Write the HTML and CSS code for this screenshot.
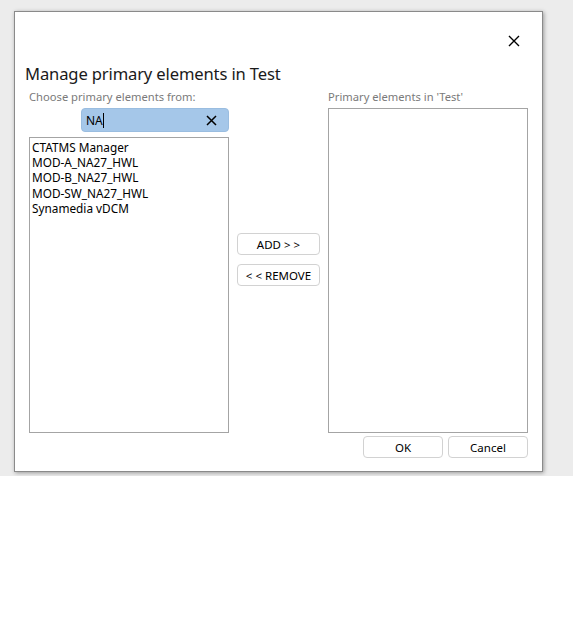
FILE: index.html
```html
<!DOCTYPE html>
<html>
<head>
<meta charset="utf-8">
<link rel="stylesheet" href="styles.css">
</head>
<body>
<div class="backdrop">
  <div class="dialog">
    <div class="header">
      <button class="close" aria-label="Close">
        <svg width="12" height="12" viewBox="0 0 12 12"><path d="M1 1 L11 11 M11 1 L1 11" stroke="#000" stroke-width="1.4" fill="none"/></svg>
      </button>
    </div>
    <h1 class="title">Manage primary elements in Test</h1>
    <div class="body">
      <div class="col">
        <div class="label">Choose primary elements from:</div>
        <div class="search">
          <span class="search-text">NA<span class="caret"></span></span>
          <svg class="clear" width="11" height="11" viewBox="0 0 11 11"><path d="M1 1 L10 10 M10 1 L1 10" stroke="#000" stroke-width="1.5" fill="none"/></svg>
        </div>
        <ul class="list list-left">
          <li>CTATMS Manager</li>
          <li>MOD-A_NA27_HWL</li>
          <li>MOD-B_NA27_HWL</li>
          <li>MOD-SW_NA27_HWL</li>
          <li>Synamedia vDCM</li>
        </ul>
      </div>
      <div class="mid">
        <button class="btn move">ADD &gt; &gt;</button>
        <button class="btn move">&lt; &lt; REMOVE</button>
      </div>
      <div class="col">
        <div class="label">Primary elements in 'Test'</div>
        <ul class="list list-right"></ul>
      </div>
    </div>
    <div class="footer">
      <button class="btn action">OK</button>
      <button class="btn action">Cancel</button>
    </div>
  </div>
</div>
</body>
</html>
```
FILE: styles.css
```css
* { box-sizing: border-box; }
body {
  margin: 0;
  background: #ffffff;
  font-family: "Noto Sans", "Open Sans", sans-serif;
}
.backdrop {
  background: #ececec;
  height: 476px;
  padding: 11px 0 0 14px;
}
.dialog {
  width: 529px;
  height: 461px;
  background: #ffffff;
  border: 1px solid #8a8a8a;
  box-shadow: 1px 1px 4px rgba(0,0,0,0.35);
  display: flex;
  flex-direction: column;
}
.header {
  height: 50px;
  display: flex;
  justify-content: flex-end;
  padding: 14px 13px 0 0;
}
.close {
  width: 30px;
  height: 30px;
  border: none;
  background: transparent;
  padding: 0;
  display: flex;
  align-items: center;
  justify-content: center;
}
.title {
  margin: 0 0 0 10px;
  font-weight: normal;
  font-size: 16.6px;
  letter-spacing: -0.15px;
  line-height: 24px;
  height: 27px;
  color: #1a1a1a;
}
.body {
  display: flex;
  padding-left: 14px;
}
.col {
  width: 200px;
  display: flex;
  flex-direction: column;
}
.label {
  font-size: 11.2px;
  line-height: 16px;
  color: #7a7a7a;
  height: 19px;
}
.search {
  margin-left: 52px;
  width: 148px;
  height: 24px;
  background: #a5c7e9;
  border: 1px solid #9abde0;
  border-radius: 4px;
  display: flex;
  align-items: center;
  justify-content: space-between;
  padding: 0 11px 0 4px;
  font-size: 12px;
  color: #000;
}
.search-text {
  display: flex;
  align-items: center;
}
.caret {
  display: inline-block;
  width: 1px;
  height: 15px;
  background: #000;
}
.list {
  margin: 0;
  list-style: none;
  border: 1px solid #a4a4a4;
  padding: 2px 2px;
  font-size: 11.8px;
  line-height: 15.2px;
  color: #000;
}
.list-left {
  margin-top: 5px;
  height: 296px;
}
.list-right {
  height: 325px;
}
.mid {
  width: 99px;
  display: flex;
  flex-direction: column;
  padding: 144px 0 0 8px;
  gap: 9px;
}
.btn {
  font-family: "Noto Sans", "Open Sans", sans-serif;
  font-size: 11.5px;
  background: #ffffff;
  border: 1px solid #d2d2d2;
  border-radius: 4px;
  color: #000;
  padding: 0;
}
.move {
  width: 83px;
  height: 22px;
}
.footer {
  display: flex;
  justify-content: flex-end;
  gap: 5px;
  padding: 3px 14px 0 0;
}
.action {
  width: 80px;
  height: 22px;
}
```
